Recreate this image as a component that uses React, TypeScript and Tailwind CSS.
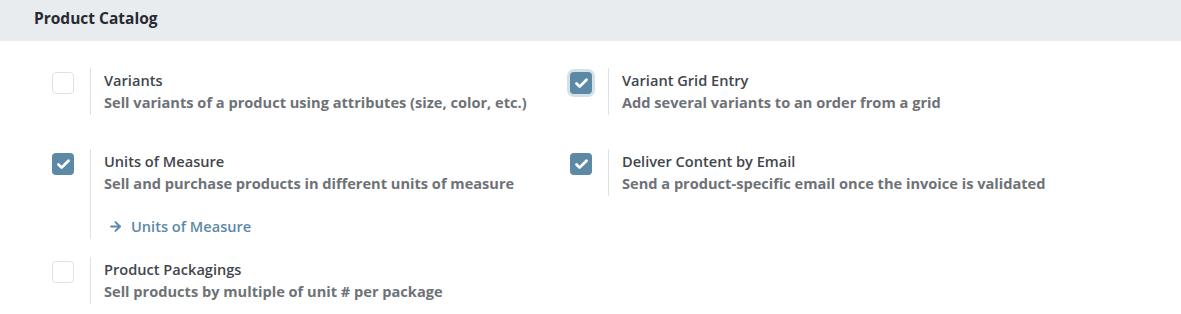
import { Check, ArrowRight } from 'lucide-react';

type Setting = {
  title: string;
  desc: string;
  checked: boolean;
  focused?: boolean;
  link?: string;
};

function CheckBox({ checked, focused }: { checked: boolean; focused?: boolean }) {
  return (
    <div
      className={`flex h-[22px] w-[22px] items-center justify-center rounded-[4px] ${
        checked ? 'bg-[#5b89a6]' : 'border border-[#dee2e6] bg-white'
      } ${focused ? 'ring-[3px] ring-[#d5e1e9]' : ''}`}
    >
      {checked && <Check className="h-[15px] w-[15px] text-white" strokeWidth={4.5} />}
    </div>
  );
}

function SettingBox({ s }: { s: Setting }) {
  return (
    <div className="flex">
      <div className="w-[38px] shrink-0 pt-1">
        <CheckBox checked={s.checked} focused={s.focused} />
      </div>
      <div className="border-l border-[#dee2e6] pl-[13px] pt-[2px] pb-[2px]">
        <div className="text-[14.6px] font-semibold leading-[21px] text-[#42464c]">{s.title}</div>
        <div className="text-[14.6px] font-bold leading-[22px] text-[#6e7277]">{s.desc}</div>
        {s.link && (
          <div className="mt-[22px] flex items-center gap-[8px] pl-[4px] text-[14.6px] font-semibold leading-[21px] text-[#5b89a6]">
            <ArrowRight className="h-[15px] w-[15px]" strokeWidth={3.2} />
            {s.link}
          </div>
        )}
      </div>
    </div>
  );
}

export default function App() {
  const rows: Setting[][] = [
    [
      { title: 'Variants', desc: 'Sell variants of a product using attributes (size, color, etc.)', checked: false },
      { title: 'Variant Grid Entry', desc: 'Add several variants to an order from a grid', checked: true, focused: true },
    ],
    [
      {
        title: 'Units of Measure',
        desc: 'Sell and purchase products in different units of measure',
        checked: true,
        link: 'Units of Measure',
      },
      { title: 'Deliver Content by Email', desc: 'Send a product-specific email once the invoice is validated', checked: true },
    ],
    [{ title: 'Product Packagings', desc: 'Sell products by multiple of unit # per package', checked: false }],
  ];

  return (
    <div className="min-h-screen bg-white font-['Open_Sans',sans-serif]">
      <div className="flex h-[41px] items-center bg-[#e9ecef] px-[34px] pb-[3px] text-[15.5px] font-bold text-[#262a30]">
        Product Catalog
      </div>
      <div className="pl-[52px] pt-[27px]">
        {rows.map((row, i) => (
          <div
            key={i}
            className={`grid grid-cols-[518px_518px] items-start ${i === 1 ? 'mt-[34px]' : ''} ${i === 2 ? 'mt-[18px]' : ''}`}
          >
            {row.map((s) => (
              <SettingBox key={s.title} s={s} />
            ))}
          </div>
        ))}
      </div>
    </div>
  );
}
